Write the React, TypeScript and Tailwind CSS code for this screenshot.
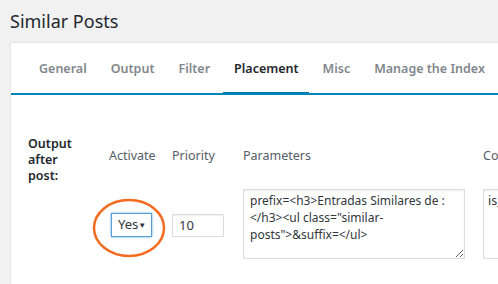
import React from "react";

const tabs = ["General", "Output", "Filter", "Placement", "Misc", "Manage the Index"];

export default function App() {
    return (
        <div
            className="h-[284px] w-[498px] overflow-hidden bg-[#f1f1f1] text-[#32373c]"
            style={{ fontFamily: '"Noto Sans", "Open Sans", sans-serif' }}
        >
            <h1 className="px-[10px] pt-[6px] text-[18px] leading-[30px] font-normal whitespace-nowrap text-[#23282d]">Similar Posts</h1>
            <div className="mt-[6px] ml-[10px] h-[260px] border-t border-l border-[#e5e5e5] bg-white">
                <div className="relative flex h-[52px] items-center pl-[16px] text-[12.5px] font-semibold whitespace-nowrap">
                    {tabs.map((t) => (
                        <div
                            key={t}
                            className={`relative flex h-full shrink-0 items-center px-[12px] ${t === "Placement" ? "text-[#23282d]" : "text-[#82878c]"}`}
                        >
                            {t}
                            {t === "Placement" && <div className="absolute right-[2px] bottom-0 left-[1px] h-[3px] bg-[#0073aa]" />}
                        </div>
                    ))}
                    <div className="absolute right-0 bottom-0 left-0 h-[2px] bg-[#0085ba]" />
                </div>
                <div className="flex pt-[41px] pl-[17px] text-[12.5px] whitespace-nowrap">
                    <div className="w-[81px] shrink-0 leading-[16px] font-semibold text-[#23282d]">
                        Output
                        <br />
                        after
                        <br />
                        post:
                    </div>
                    <div className="flex shrink-0 flex-col">
                        <div className="flex h-[40px] items-center text-[#555d66]">
                            <div className="w-[63px] shrink-0">Activate</div>
                            <div className="w-[71px] shrink-0">Priority</div>
                            <div className="w-[240px] shrink-0">Parameters</div>
                            <div>Condition</div>
                        </div>
                        <div className="mt-[13px] flex items-start">
                            <div className="relative w-[63px] shrink-0 pt-[24px]">
                                <div className="ml-[2px] flex h-[24px] w-[41px] items-center justify-between border border-[#5b9dd9] pr-[5px] pl-[6px] text-[13px] shadow-[0_0_2px_rgba(30,140,190,0.8)]">
                                    <span>Yes</span>
                                    <span className="text-[8px]">▼</span>
                                </div>
                                <svg className="absolute top-[9px] left-[-17px]" width="76" height="62" viewBox="0 0 76 62">
                                    <ellipse cx="37" cy="30" rx="35" ry="28" fill="none" stroke="#f36b21" strokeWidth="2.5" />
                                </svg>
                            </div>
                            <div className="w-[71px] shrink-0 pt-[25px]">
                                <div className="flex h-[23px] w-[52px] items-center border border-[#ddd] px-[6px] text-[13px] shadow-[inset_0_1px_2px_rgba(0,0,0,0.07)]">
                                    10
                                </div>
                            </div>
                            <div className="w-[240px] shrink-0">
                                <textarea
                                    readOnly
                                    wrap="off"
                                    className="block h-[70px] w-[222px] resize overflow-hidden border border-[#ddd] px-[6px] py-[2px] text-[12px] leading-[17px] text-[#32373c] shadow-[inset_0_1px_2px_rgba(0,0,0,0.07)] outline-none"
                                    style={{ fontFamily: '"Noto Sans", "Open Sans", sans-serif' }}
                                    value={'prefix=<h3>Entradas Similares de :\n</h3><ul class="similar-\nposts">&suffix=</ul>'}
                                />
                            </div>
                            <div className="h-[70px] w-[60px] shrink-0 overflow-hidden border border-[#ddd] px-[4px] py-[2px] leading-[17px] shadow-[inset_0_1px_2px_rgba(0,0,0,0.07)]">
                                is_single
                            </div>
                        </div>
                    </div>
                </div>
            </div>
        </div>
    );
}
